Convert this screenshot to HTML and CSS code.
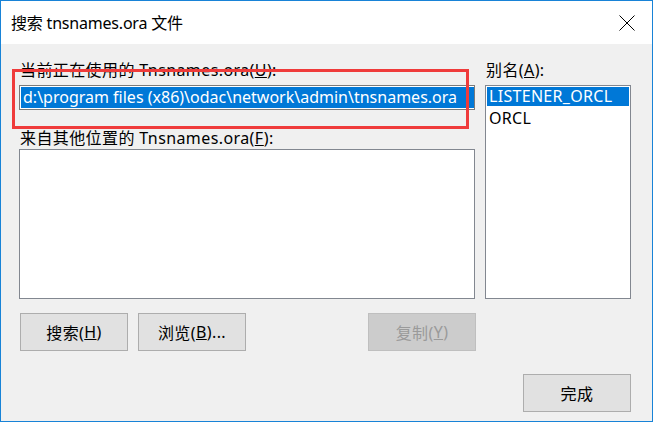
FILE: index.html
```html
<!DOCTYPE html>
<html lang="zh-CN">
<head>
<meta charset="utf-8">
<title>搜索 tnsnames.ora 文件</title>
<link rel="stylesheet" href="styles.css">
</head>
<body>
<div class="window">
  <div class="titlebar">
    <span class="title">搜索 tnsnames.ora 文件</span>
    <svg class="close" width="16" height="16" viewBox="0 0 16 16"><path d="M0.5 0.5 L15.5 15.5 M15.5 0.5 L0.5 15.5" stroke="#000" stroke-width="1" fill="none"/></svg>
  </div>
  <div class="content">
    <div class="main">
      <div class="left">
        <div class="label l1">当前正在使用的 Tnsnames.ora(<u>U</u>):</div>
        <div class="field"><div class="sel">d:\program files (x86)\odac\network\admin\tnsnames.ora</div></div>
        <div class="label l2">来自其他位置的 Tnsnames.ora(<u>F</u>):</div>
        <div class="box big"></div>
      </div>
      <div class="right">
        <div class="label l1">别名(<u>A</u>):</div>
        <div class="box alias">
          <div class="item selected">LISTENER_ORCL</div>
          <div class="item second">ORCL</div>
        </div>
      </div>
    </div>
    <div class="buttons">
      <div class="btn">搜索(<u>H</u>)</div>
      <div class="btn">浏览(<u>B</u>)...</div>
      <div class="btn disabled">复制(<u>Y</u>)</div>
    </div>
    <div class="footer">
      <div class="btn">完成</div>
    </div>
  </div>
  <div class="annot"></div>
</div>
</body>
</html>
```
FILE: styles.css
```css
* { box-sizing: border-box; }
html, body { margin: 0; padding: 0; background: #f0f0f0; }
body {
  font-family: "Noto Sans", "Noto Sans CJK SC", sans-serif;
  color: #000;
}
.window {
  position: relative;
  width: 653px;
  height: 422px;
  border: 1px solid #1883d7;
  background: #f0f0f0;
}
.titlebar {
  height: 43px;
  background: #fff;
  display: flex;
  align-items: center;
  padding-left: 10px;
  padding-right: 17px;
}
.title {
  flex: 1;
  font-size: 16px;
  line-height: 22px;
  padding-top: 1px;
  letter-spacing: -0.2px;
}
.close { display: block; }
.content {
  padding: 16px 0 0 18px;
}
.main {
  display: grid;
  grid-template-columns: 456px 146px;
  column-gap: 10px;
}
.label {
  font-size: 16px;
  line-height: 20px;
  height: 20px;
  white-space: nowrap;
  padding-left: 1px;
  letter-spacing: 0.4px;
}
.l1 { margin-bottom: 5px; }
.l2 { margin-top: 18px; margin-bottom: 1px; }
.field {
  height: 25px;
  border: 1px solid #7a7a7a;
  background: #fff;
  padding: 1px 0 1px 1px;
}
.sel {
  height: 21px;
  background: #0078d7;
  color: #fff;
  font-size: 16px;
  line-height: 21px;
  padding-left: 2px;
  white-space: nowrap;
  overflow: hidden;
}
.box {
  border: 1px solid #828790;
  background: #fff;
}
.big { height: 150px; }
.alias { height: 214px; padding: 1px; }
.item {
  font-size: 16px;
  line-height: 19px;
  height: 19px;
  padding-left: 2px;
  white-space: nowrap;
  letter-spacing: 0.3px;
}
.item.selected { background: #0078d7; color: #fff; }
.item.second { margin-top: 3px; }
.buttons {
  display: flex;
  gap: 10px;
  width: 456px;
  margin: 14px 0 0 1px;
}
.btn {
  width: 108px;
  height: 38px;
  border: 1px solid #adadad;
  background: #e1e1e1;
  display: flex;
  align-items: center;
  justify-content: center;
  font-size: 16px;
  letter-spacing: 0.4px;
  white-space: nowrap;
}
.btn.disabled {
  margin-left: auto;
  background: #cccccc;
  border-color: #bfbfbf;
  color: #9a9a9a;
}
.footer {
  display: flex;
  justify-content: flex-end;
  width: 612px;
  margin-top: 23px;
}
.annot {
  position: absolute;
  left: 11px;
  top: 68px;
  width: 457px;
  height: 60px;
  border: 3px solid #ef3b3b;
}
```
